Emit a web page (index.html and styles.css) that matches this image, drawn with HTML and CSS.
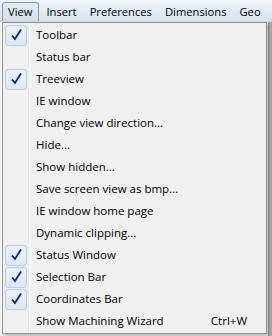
FILE: index.html
```html
<!DOCTYPE html>
<html lang="en">
<head>
    <meta charset="UTF-8">
    <title>View menu</title>
    <link rel="stylesheet" href="styles.css">
</head>
<body>
<div class="menubar">
    <span class="top open">View</span>
    <span class="top">Insert</span>
    <span class="top">Preferences</span>
    <span class="top">Dimensions</span>
    <span class="top">Geo</span>
</div>
<div class="window"></div>
<ul class="dropdown">
    <li class="checked"><i class="box"><svg width="21" height="20" viewBox="0 0 21 20"><path d="M6 10.5 L9 14 L15 4.5" /></svg></i><span>Toolbar</span></li>
    <li><i class="box"></i><span>Status bar</span></li>
    <li class="checked"><i class="box"><svg width="21" height="20" viewBox="0 0 21 20"><path d="M6 10.5 L9 14 L15 4.5" /></svg></i><span>Treeview</span></li>
    <li><i class="box"></i><span>IE window</span></li>
    <li><i class="box"></i><span>Change view direction...</span></li>
    <li><i class="box"></i><span>Hide...</span></li>
    <li><i class="box"></i><span>Show hidden...</span></li>
    <li><i class="box"></i><span>Save screen view as bmp...</span></li>
    <li><i class="box"></i><span>IE window home page</span></li>
    <li><i class="box"></i><span>Dynamic clipping...</span></li>
    <li class="checked"><i class="box"><svg width="21" height="20" viewBox="0 0 21 20"><path d="M6 10.5 L9 14 L15 4.5" /></svg></i><span>Status Window</span></li>
    <li class="checked"><i class="box"><svg width="21" height="20" viewBox="0 0 21 20"><path d="M6 10.5 L9 14 L15 4.5" /></svg></i><span>Selection Bar</span></li>
    <li class="checked"><i class="box"><svg width="21" height="20" viewBox="0 0 21 20"><path d="M6 10.5 L9 14 L15 4.5" /></svg></i><span>Coordinates Bar</span></li>
    <li><i class="box"></i><span>Show Machining Wizard</span><em>Ctrl+W</em></li>
</ul>
</body>
</html>
```

FILE: styles.css
```css
*{
    margin: 0;
    padding: 0;
    list-style: none;
    box-sizing: border-box;
}
html, body{
    width: 272px;
    height: 336px;
    overflow: hidden;
}
body{
    position: relative;
    background-color: #f4f4f4;
    font-family: "Open Sans", "Liberation Sans", sans-serif;
    font-size: 11.5px;
    color: #000;
}
.menubar{
    height: 22px;
    display: flex;
    align-items: stretch;
    padding: 2px 0 0 2px;
    background: linear-gradient(#f1f5fb, #e0e9f5 60%, #d9e3f1);
    border-bottom: 1px solid #c9d4e2;
    font-size: 11.2px;
    white-space: nowrap;
}
.top{
    display: flex;
    align-items: center;
    padding: 0 6px 1px 5px;
    border: 1px solid transparent;
    border-bottom: 0;
}
.top.open{
    padding: 0 6px 1px 5px;
    border-color: #8c9aad;
    border-radius: 3px 3px 0 0;
    background: linear-gradient(#e4ebf4, #d5dfec);
    margin-right: 1px;
}
.window{
    height: 314px;
    border-right: 4px solid #a8a8a8;
    background-color: #f6f6f6;
}
.dropdown{
    position: absolute;
    left: 2px;
    top: 22px;
    width: 265px;
    height: 312px;
    padding: 1px 0;
    border: 1px solid #979797;
    background: linear-gradient(to right, #f0f0f0 25px, #e2e3e3 25px, #e2e3e3 26px, #ffffff 26px, #ffffff 27px, #f0f0f0 27px);
    box-shadow: 2px 2px 2px rgba(0, 0, 0, 0.25);
}
.dropdown li{
    height: 22px;
    display: flex;
    align-items: center;
    padding-right: 19px;
}
.box{
    width: 22px;
    height: 21px;
    margin: 0 9px 0 2px;
    flex: none;
    border: 1px solid transparent;
    border-radius: 3px;
}
.checked .box{
    border-color: #b9cde8;
    background: linear-gradient(#eaf1fb, #dce7f6);
}
.box svg{
    display: block;
    margin-top: -1px;
}
.box path{
    fill: none;
    stroke: #13237a;
    stroke-width: 1.8;
}
.dropdown span{
    flex: 1;
    padding-bottom: 1px;
}
.dropdown em{
    font-style: normal;
    padding-bottom: 1px;
}
```
